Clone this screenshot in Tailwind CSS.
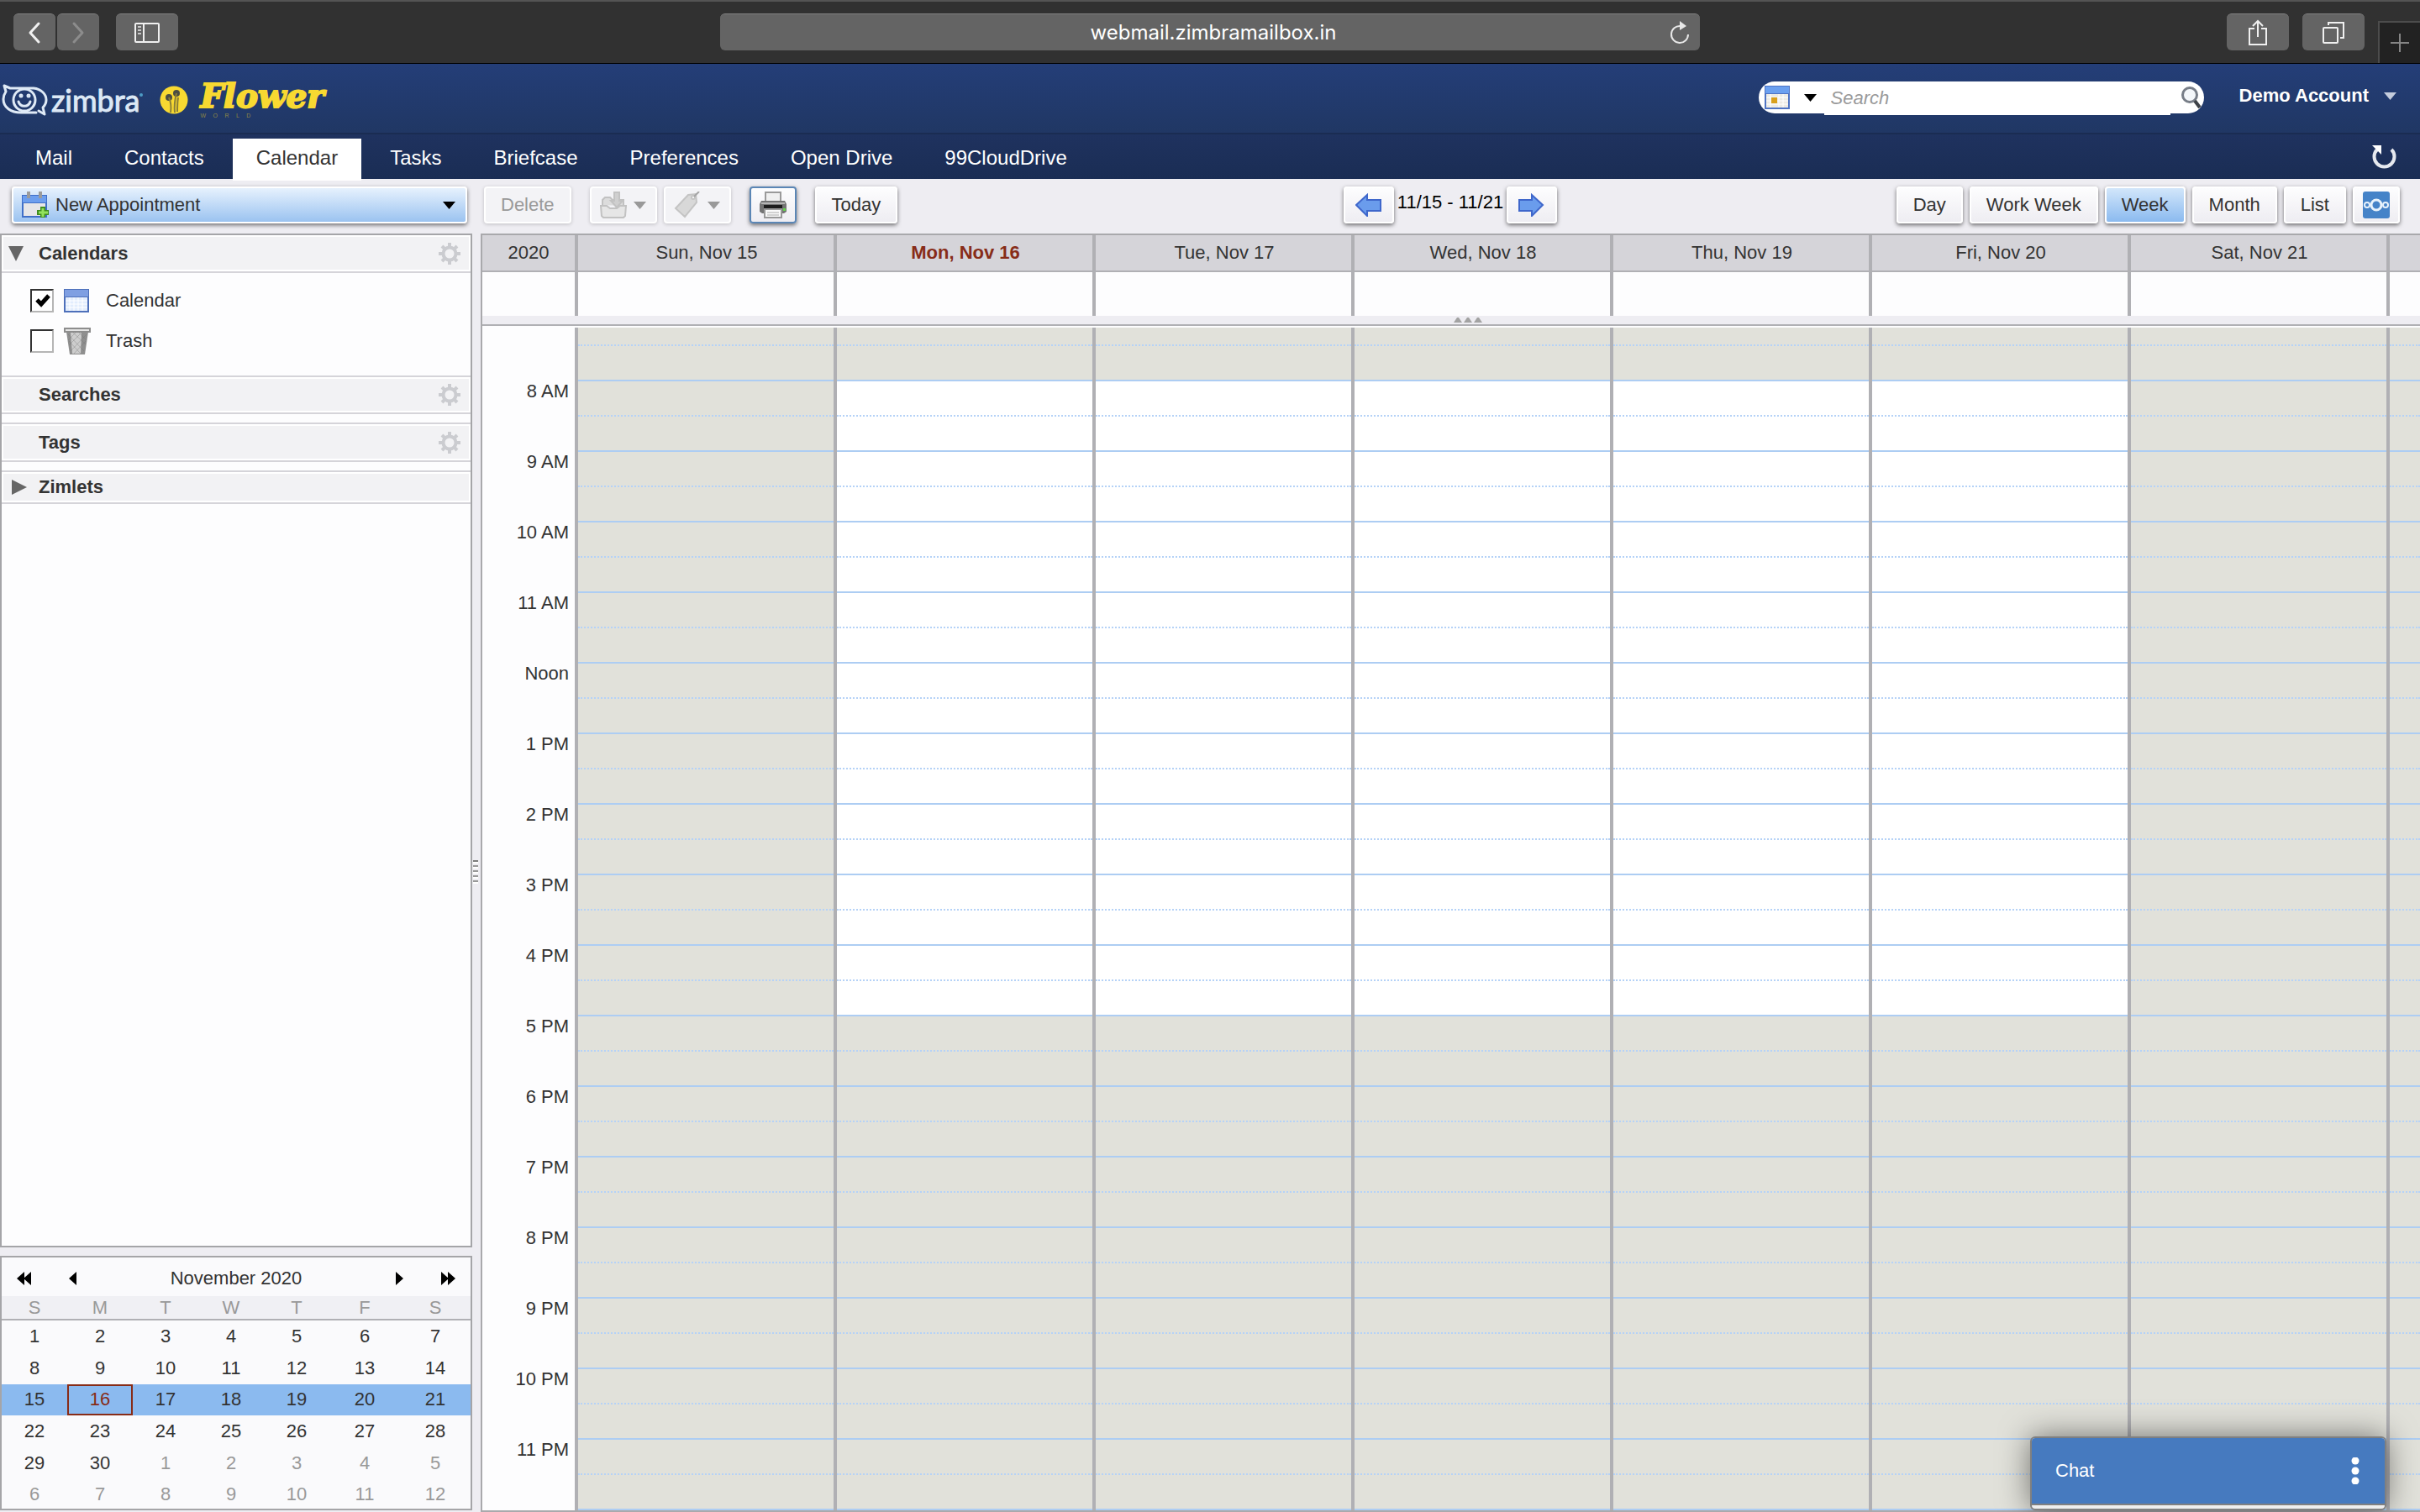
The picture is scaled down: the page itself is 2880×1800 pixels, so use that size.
<!DOCTYPE html>
<html lang="en">
<head>
    <meta charset="UTF-8">
    <meta name="viewport" content="width=device-width, initial-scale=1.0">
    <title>Zimbra: Calendar</title>
    <script src="https://cdn.jsdelivr.net/npm/@tailwindcss/browser@4"></script>
</head>
<body class="h-screen flex flex-col overflow-hidden bg-[#eeedf2] font-['Liberation_Sans',Arial,sans-serif] text-[22px] leading-7 text-[#333]">

    <!-- Browser bar -->
    <div class="h-[76px] shrink-0 grid grid-cols-[1fr_40.5%_1fr] bg-[#313131] border-t-2 border-t-[#545454] border-b border-b-black">
        <div class="flex items-start pt-[14px] pl-4">
            <button aria-label="Back" class="w-[50px] h-11 mr-0.5 flex items-center justify-center rounded-md bg-[#646464] border-t border-[#808080]">
                <svg class="w-4 h-7" viewBox="0 0 16 28" fill="none" stroke="#f0f0f0" stroke-width="3" stroke-linecap="round" stroke-linejoin="round"><path d="M13 3 3 14l10 11"/></svg>
            </button>
            <button aria-label="Forward" class="w-[50px] h-11 mr-5 flex items-center justify-center rounded-md bg-[#646464] border-t border-[#808080]">
                <svg class="w-4 h-7" viewBox="0 0 16 28" fill="none" stroke="#8c8c8c" stroke-width="3" stroke-linecap="round" stroke-linejoin="round"><path d="m3 3 10 11L3 25"/></svg>
            </button>
            <button aria-label="Sidebar" class="w-[74px] h-11 flex items-center justify-center rounded-md bg-[#646464] border-t border-[#808080]">
                <svg class="w-[30px] h-6" viewBox="0 0 30 24" fill="none" stroke="#f0f0f0" stroke-width="2"><rect x="1" y="1" width="28" height="22" rx="1"/><path d="M11 1v22"/><path d="M4 5h4M4 9h4M4 13h4" stroke="#c8c8c8"/></svg>
            </button>
        </div>
        <div class="mt-[14px] h-11 flex items-center rounded-md bg-[#646464] border-t border-[#808080] pl-11 pr-3">
            <span class="flex-1 text-center text-white text-2xl font-['Inter',sans-serif]">webmail.zimbramailbox.in</span>
            <button aria-label="Reload">
                <svg class="w-6 h-7" viewBox="0 0 24 28" fill="none" stroke="#e8e8e8" stroke-width="2"><path d="M13 6a10 10 0 1 0 9 10"/><path d="M12 0v11l8-5z" fill="#e8e8e8" stroke="none"/></svg>
            </button>
        </div>
        <div class="flex items-start justify-end">
            <button aria-label="Share" class="mt-[14px] w-[74px] h-11 flex items-center justify-center rounded-md bg-[#646464] border-t border-[#808080]">
                <svg class="w-6 h-8" viewBox="0 0 24 32" fill="none" stroke="#f0f0f0" stroke-width="2"><path d="M8 11H2v19h20V11h-6M12 21V2M6 8l6-6 6 6"/></svg>
            </button>
            <button aria-label="Tabs" class="mt-[14px] ml-4 mr-4 w-[74px] h-11 flex items-center justify-center rounded-md bg-[#646464] border-t border-[#808080]">
                <svg class="w-[26px] h-[26px]" viewBox="0 0 26 26" fill="none" stroke="#f0f0f0" stroke-width="2"><rect x="1" y="7" width="17" height="18" rx="1"/><path d="M7 4V1h18v18h-4"/></svg>
            </button>
            <button aria-label="New tab" class="mt-[23px] w-[50px] h-[50px] flex items-center justify-center bg-[#222] border-t-2 border-l-2 border-[#4c4c4c]">
                <svg class="w-[22px] h-[22px]" viewBox="0 0 22 22" stroke="#858585" stroke-width="2"><path d="M11 0v22M0 11h22"/></svg>
            </button>
        </div>
    </div>

    <!-- Header: logos, search, account -->
    <header class="h-[82px] shrink-0 flex items-start bg-linear-to-b from-[#243e78] to-[#203764]">
        <div class="flex items-center pt-5 pl-0.5">
            <svg class="w-[55px] h-10 shrink-0" viewBox="0 0 55 40" fill="none" stroke="#dfeaf6" stroke-width="3" stroke-linecap="round" stroke-linejoin="round">
                <path d="M41 35H23C11 35 2 29 2 19c0-4 1-6 3-9L3 3l7 3h28c9 1 15 7 15 14 0 4-2 7-4 9l2 8-7-4"/>
                <circle cx="27" cy="20" r="13"/><path d="M20 22c2 7 12 7 14 0"/>
                <circle cx="23" cy="15" r="1" fill="#dfeaf6"/><circle cx="32" cy="15" r="1" fill="#dfeaf6"/>
            </svg>
            <span class="ml-1 text-[36px] leading-10 text-[#dce8f5] [-webkit-text-stroke:1px_#dce8f5] font-['Lato',sans-serif]">zimbra</span>
            <svg class="w-1 h-2 mb-3 shrink-0" viewBox="0 0 4 8" fill="#4d9bc4"><circle cx="2" cy="4" r="2"/></svg>
            <svg class="w-[34px] h-[34px] ml-5 shrink-0" viewBox="0 0 34 34">
                <circle cx="17" cy="17" r="16.500" fill="#f8d931"/>
                <g fill="#4b4d42"><circle cx="11" cy="14" r="4"/><circle cx="20" cy="9" r="4"/></g>
                <path d="M11 14c3 7 3 12 2 18M20 9c-2 8-3 14-2 23M22 14c-1 6-1 12-1 17" stroke="#8a7f37" stroke-width="2" fill="none"/>
            </svg>
            <div class="relative ml-3.5">
                <span class="block pb-2.5 text-[39px] leading-9 font-bold italic text-[#f8d931] [-webkit-text-stroke:2px_#f8d931] font-['DejaVu_Serif',serif]">Flower</span>
                <span class="absolute left-0 top-9 flex w-[60px] justify-between text-[7px] leading-3 text-[#8d8745]"><span>W</span><span>O</span><span>R</span><span>L</span><span>D</span></span>
            </div>
        </div>

        <form class="ml-auto mt-[21px] h-[38px] w-[530px] flex items-center rounded-full bg-white pl-1.5">
            <svg class="w-8 h-7 shrink-0" viewBox="0 0 32 28"><rect x="1" y="0" width="30" height="28" fill="#4f74c4"/><rect x="2" y="1" width="28" height="8" fill="#6ba0f0"/><rect x="3" y="10" width="26" height="16" fill="#eceae4"/><path d="M3 14h26M3 18h26M3 22h26M8 10v16M18 10v16M23 10v16" stroke="#fff"/><rect x="9" y="14" width="7" height="7" fill="#d9a01c"/></svg>
            <button type="button" aria-label="Search in" class="ml-4 w-6"><svg class="w-[15px] h-[9px]" viewBox="0 0 15 9"><path d="M0 0h15L7.500 9z"/></svg></button>
            <input type="text" aria-label="Search" placeholder="Search" class="flex-1 min-w-0 h-10 mt-0.5 pl-2 bg-white text-[22px] italic placeholder:text-[#999] outline-none">
            <button type="button" aria-label="Run search" class="ml-3 mr-0.5">
                <svg class="w-[26px] h-7" viewBox="0 0 26 28" fill="none"><circle cx="11" cy="11" r="8.500" stroke="#777d87" stroke-width="3" fill="#f4f7fa"/><path d="m17 18 6 8" stroke="#3e4248" stroke-width="4"/></svg>
            </button>
        </form>
        <button class="mt-6 ml-[42px] mr-7 flex items-center font-bold text-white">Demo Account
            <svg class="ml-[18px] w-[15px] h-[9px]" viewBox="0 0 15 9" fill="#c5cddd"><path d="M0 0h15L7.500 9z"/></svg>
        </button>
    </header>

    <!-- Application tabs -->
    <nav class="h-[55px] shrink-0 flex items-start gap-1.5 pl-[14px] pr-7 border-t-2 border-[#1a2c52] bg-linear-to-b from-[#1f325f] to-[#1a2d54] text-2xl leading-[46px] text-white">
        <a href="#" class="mt-[5px] h-[50px] px-7">Mail</a>
        <a href="#" class="mt-[5px] h-[50px] px-7">Contacts</a>
        <a href="#" class="relative z-10 mt-[5px] h-[50px] px-7 bg-white text-[#333]">Calendar</a>
        <a href="#" class="mt-[5px] h-[50px] px-7">Tasks</a>
        <a href="#" class="mt-[5px] h-[50px] px-7">Briefcase</a>
        <a href="#" class="mt-[5px] h-[50px] px-7">Preferences</a>
        <a href="#" class="mt-[5px] h-[50px] px-7">Open Drive</a>
        <a href="#" class="mt-[5px] h-[50px] px-7">99CloudDrive</a>
        <button aria-label="Refresh" class="ml-auto mt-3">
            <svg class="w-[30px] h-[30px]" viewBox="0 0 30 30" fill="none"><path d="M24 6a12 12 0 1 1-17 0" stroke="#e6e9ef" stroke-width="4"/><path d="M1 1h11v11z" fill="#fff"/></svg>
        </button>
    </nav>

    <!-- Toolbar -->
    <div class="h-[65px] shrink-0 flex items-start pt-[9px]">
        <div class="w-[572px] shrink-0 pl-[14px] pr-4">
            <button class="w-full h-11 flex items-center pl-2.5 pr-3 rounded-sm border-2 border-white bg-linear-to-b from-[#e6f1fd] to-[#9bc3f0] shadow-[0_2px_5px_rgba(0,0,0,0.55)]">
                <svg class="w-8 h-8 mr-2" viewBox="0 0 32 32"><rect x="0" y="4" width="30" height="27" fill="#3f6fc8"/><rect x="1" y="5" width="28" height="8" fill="#6d9fee"/><rect x="2" y="14" width="26" height="15" fill="#e6e6e8"/><path d="M8 0v8M22 0v8" stroke="#9b9b9b" stroke-width="4"/><path d="M25 18v13M18 25h14" stroke="#3f8d1e" stroke-width="6"/><path d="M25 20v10M20 25h11" stroke="#93e25c" stroke-width="3"/></svg>
                New Appointment
                <svg class="ml-auto w-[15px] h-[9px]" viewBox="0 0 15 9"><path d="M0 0h15L7.500 9z"/></svg>
            </button>
        </div>
        <div class="flex-1 grid grid-cols-[1fr_auto_1fr]">
            <div class="flex pl-1">
                <button disabled class="h-11 px-[18px] rounded-sm border-2 border-white bg-[#f3f3f6] text-[#999] shadow-[0_1px_4px_rgba(0,0,0,0.2)]">Delete</button>
                <button disabled aria-label="Move" class="ml-[22px] w-20 h-11 flex items-center justify-center gap-2 rounded-sm border-2 border-white bg-[#f3f3f6] shadow-[0_1px_4px_rgba(0,0,0,0.2)]">
                    <svg class="w-8 h-8" viewBox="0 0 32 32" fill="#dcdcdc" stroke="#c2c2c2" stroke-width="2"><path d="M3 16V10l3-3h6l3 3h13v7"/><path d="M17 1h6v10h4l-7 8-7-8h4z" fill="#cfcfcf"/><path d="M1 17h7l4 3h8l4-3h7l-1 12-2 2H4l-2-2z" fill="#e6e6e6"/></svg>
                    <svg class="w-[15px] h-[9px]" viewBox="0 0 15 9" fill="#999"><path d="M0 0h15L7.500 9z"/></svg>
                </button>
                <button disabled aria-label="Tag" class="ml-2 w-20 h-11 flex items-center justify-center gap-2 rounded-sm border-2 border-white bg-[#f3f3f6] shadow-[0_1px_4px_rgba(0,0,0,0.2)]">
                    <svg class="w-8 h-8" viewBox="0 0 32 32" fill="#d8d8d8" stroke="#c4c4c4" stroke-width="2"><path d="M2 20 17 4l9-1 1 10-14 17z"/><circle cx="23" cy="7" r="2" fill="#fff"/><path d="m24 6 6-6" stroke="#a5a5a5"/></svg>
                    <svg class="w-[15px] h-[9px]" viewBox="0 0 15 9" fill="#999"><path d="M0 0h15L7.500 9z"/></svg>
                </button>
                <button aria-label="Print" class="ml-[22px] w-14 h-11 flex items-center justify-center rounded-sm border-2 border-[#5b86b5] bg-linear-to-b from-[#fdfdfe] to-[#eeedf2] shadow-[0_2px_5px_rgba(0,0,0,0.55)]">
                    <svg class="w-8 h-8" viewBox="0 0 32 32"><rect x="7" y="1" width="18" height="12" fill="#f0f0f0" stroke="#9a9a9a" stroke-width="2"/><path d="M2 11h28l2 4v9l-3 2H3l-3-2v-9z" fill="#747474"/><path d="M2 14h28" stroke="#b5b5b5" stroke-width="2"/><rect x="5" y="16" width="22" height="4" fill="#1c1c1c"/><rect x="6" y="21" width="20" height="10" fill="#fafafa" stroke="#999" stroke-width="2"/><path d="M9 25h14M9 28h14" stroke="#aaa"/><rect x="28" y="20" width="3" height="3" fill="#62d44a"/></svg>
                </button>
                <button class="ml-[22px] h-11 px-[18px] rounded-sm border-2 border-white bg-linear-to-b from-[#fdfdfe] to-[#eeedf2] shadow-[0_2px_5px_rgba(0,0,0,0.55)]">Today</button>
            </div>
            <div class="flex items-start">
                <button aria-label="Previous week" class="w-[60px] h-11 flex items-center justify-center rounded-sm border-2 border-white bg-linear-to-b from-[#fdfdfe] to-[#eeedf2] shadow-[0_2px_5px_rgba(0,0,0,0.55)]">
                    <svg class="w-8 h-7" viewBox="0 0 32 28" fill="#6a9cec" stroke="#3f67cb" stroke-width="2"><path d="M1 14 14 2v6h16v13H14v6z"/></svg>
                </button>
                <span class="w-[134px] pt-[5px] text-center text-black whitespace-nowrap">11/15 - 11/21</span>
                <button aria-label="Next week" class="w-[60px] h-11 flex items-center justify-center rounded-sm border-2 border-white bg-linear-to-b from-[#fdfdfe] to-[#eeedf2] shadow-[0_2px_5px_rgba(0,0,0,0.55)]">
                    <svg class="w-8 h-7" viewBox="0 0 32 28" fill="#6a9cec" stroke="#3f67cb" stroke-width="2"><path d="M29 14 16 2v6H1v13h15v6z"/></svg>
                </button>
            </div>
            <div class="flex justify-end gap-2 pr-6">
                <button class="h-11 px-[18px] rounded-sm border-2 border-white bg-linear-to-b from-[#fdfdfe] to-[#eeedf2] shadow-[0_2px_5px_rgba(0,0,0,0.55)]">Day</button>
                <button class="h-11 px-[18px] rounded-sm border-2 border-white bg-linear-to-b from-[#fdfdfe] to-[#eeedf2] shadow-[0_2px_5px_rgba(0,0,0,0.55)]">Work Week</button>
                <button class="h-11 px-[18px] rounded-sm border-2 border-white bg-linear-to-b from-[#d2e6fa] to-[#8bbaef] shadow-[0_2px_5px_rgba(0,0,0,0.55)]">Week</button>
                <button class="h-11 px-[18px] rounded-sm border-2 border-white bg-linear-to-b from-[#fdfdfe] to-[#eeedf2] shadow-[0_2px_5px_rgba(0,0,0,0.55)]">Month</button>
                <button class="h-11 px-[18px] rounded-sm border-2 border-white bg-linear-to-b from-[#fdfdfe] to-[#eeedf2] shadow-[0_2px_5px_rgba(0,0,0,0.55)]">List</button>
                <button aria-label="Nextcloud" class="w-14 h-11 flex items-center justify-center rounded-sm border-2 border-white bg-linear-to-b from-[#fdfdfe] to-[#eeedf2] shadow-[0_2px_5px_rgba(0,0,0,0.55)]">
                    <svg class="w-8 h-8" viewBox="0 0 32 32" fill="none" stroke="#e8f2fb" stroke-width="2"><rect width="32" height="32" rx="3" fill="#4583c8" stroke="none"/><circle cx="16" cy="16" r="6" stroke-width="3"/><circle cx="5" cy="16" r="3"/><circle cx="27" cy="16" r="3"/></svg>
                </button>
            </div>
        </div>
    </div>

    <main class="flex-1 min-h-0 flex">
        <!-- Sidebar -->
        <aside class="w-[562px] shrink-0 flex flex-col gap-2.5 pb-0.5">
            <div class="flex-1 min-h-0 border-2 border-[#a5a5a8] bg-[#fdfdfe]">
                <div class="h-[45px] flex items-center pl-2 pr-3 border-b-2 border-[#d5d4d9] bg-[#f2f2f4] shadow-[inset_0_0_0_2px_#fff]">
                    <svg class="w-[18px] h-[18px]" viewBox="0 0 18 18" fill="#666"><path d="M0 0h18L9 18z"/></svg>
                    <h2 class="ml-[18px] flex-1 font-bold">Calendars</h2>
                    <svg class="w-[26px] h-[26px]" viewBox="0 0 26 26" fill="none" stroke="#cbccd0"><circle cx="13" cy="13" r="7.500" stroke-width="4"/><path d="M13 0v5M13 21v5M0 13h5M21 13h5M4 4l3 3M19 19l3 3M22 4l-3 3M7 19l-3 3" stroke-width="4"/></svg>
                </div>
                <ul class="pt-[9px] pb-[17px]">
                    <li class="h-12">
                        <label class="relative h-full flex items-center pl-[34px]">
                            <input type="checkbox" checked class="appearance-none w-7 h-7 bg-white border-2 border-t-[#333] border-l-[#333] border-r-[#b5b5b5] border-b-[#b5b5b5]">
                            <svg class="absolute left-10 top-4 w-[18px] h-[16px]" viewBox="0 0 18 16" fill="none" stroke="#000" stroke-width="5"><path d="m2 7 5 5 9-10"/></svg>
                            <svg class="ml-3 w-[30px] h-7" viewBox="0 0 30 28"><rect width="30" height="28" fill="#4e70ba"/><rect x="1" y="1" width="28" height="8" fill="#7f9fe2"/><rect x="2" y="10" width="26" height="16" fill="#e2edfd"/><path d="M2 14h26M2 18h26M2 22h26M7 10v16M12 10v16M17 10v16M22 10v16" stroke="#fff"/></svg>
                            <span class="ml-5">Calendar</span>
                        </label>
                    </li>
                    <li class="h-12">
                        <label class="h-full flex items-center pl-[34px]">
                            <input type="checkbox" class="appearance-none w-7 h-7 bg-white border-2 border-t-[#333] border-l-[#333] border-r-[#b5b5b5] border-b-[#b5b5b5]">
                            <svg class="ml-3 w-8 h-8" viewBox="0 0 32 32"><path d="M3 5h26l-4 27H7z" fill="#8f8f8f"/><path d="M8 6h13l-1 25H10z" fill="#cdcdcd"/><path d="m5 8 19 20M11 6l15 14M18 6l9 9M6 16l14 15M27 8 8 28M21 6 6 21M14 6l-9 9M26 16 12 31" stroke="#707070" stroke-opacity=".35"/><rect x="1" y="1" width="30" height="4" fill="#e4e4e4" stroke="#8d8d8d" stroke-width="2"/></svg>
                            <span class="ml-[18px]">Trash</span>
                        </label>
                    </li>
                </ul>
                <div class="h-[46px] mb-2.5 flex items-center pl-11 pr-3 border-y-2 border-[#d5d4d9] bg-[#f2f2f4] shadow-[inset_0_0_0_2px_#fff]">
                    <h2 class="flex-1 font-bold">Searches</h2>
                    <svg class="w-[26px] h-[26px]" viewBox="0 0 26 26" fill="none" stroke="#cbccd0"><circle cx="13" cy="13" r="7.500" stroke-width="4"/><path d="M13 0v5M13 21v5M0 13h5M21 13h5M4 4l3 3M19 19l3 3M22 4l-3 3M7 19l-3 3" stroke-width="4"/></svg>
                </div>
                <div class="h-[47px] mb-2.5 flex items-center pl-11 pr-3 border-y-2 border-[#d5d4d9] bg-[#f2f2f4] shadow-[inset_0_0_0_2px_#fff]">
                    <h2 class="flex-1 font-bold">Tags</h2>
                    <svg class="w-[26px] h-[26px]" viewBox="0 0 26 26" fill="none" stroke="#cbccd0"><circle cx="13" cy="13" r="7.500" stroke-width="4"/><path d="M13 0v5M13 21v5M0 13h5M21 13h5M4 4l3 3M19 19l3 3M22 4l-3 3M7 19l-3 3" stroke-width="4"/></svg>
                </div>
                <div class="h-10 flex items-center pl-3 border-y-2 border-[#d5d4d9] bg-[#f2f2f4] shadow-[inset_0_0_0_2px_#fff]">
                    <svg class="w-[18px] h-[18px]" viewBox="0 0 18 18" fill="#666"><path d="M0 0v18l18-9z"/></svg>
                    <h2 class="ml-3.5 font-bold">Zimlets</h2>
                </div>
            </div>

            <!-- Mini calendar -->
            <div class="h-[303px] shrink-0 border-2 border-[#a5a5a8] bg-[#fafafc]">
                <div class="h-[46px] pt-1 flex items-center px-[18px]">
                    <button aria-label="Previous year" class="w-[62px]"><svg class="w-[18px] h-4" viewBox="0 0 18 16"><path d="M9 0v16L0 8zM17 0v16L8 8z"/></svg></button>
                    <button aria-label="Previous month"><svg class="w-[9px] h-4" viewBox="0 0 9 16"><path d="M9 0v16L0 8z"/></svg></button>
                    <span class="flex-1 text-center">November 2020</span>
                    <button aria-label="Next month"><svg class="w-[9px] h-4" viewBox="0 0 9 16"><path d="M0 0v16l9-8z"/></svg></button>
                    <button aria-label="Next year" class="w-[62px] flex justify-end"><svg class="w-[18px] h-4" viewBox="0 0 18 16"><path d="M1 0v16l9-8zM9 0v16l9-8z"/></svg></button>
                </div>
                <table class="w-full h-[255px] table-fixed border-collapse text-center leading-[26px]">
                    <thead class="bg-[#f0f0f4] text-[#999]">
                        <tr class="h-7 border-b-2 border-[#b0b0b4]">
                            <th class="w-[78px] font-normal">S</th><th class="w-[78px] font-normal">M</th><th class="w-[78px] font-normal">T</th><th class="w-[78px] font-normal">W</th><th class="w-[78px] font-normal">T</th><th class="font-normal">F</th><th class="font-normal">S</th>
                        </tr>
                    </thead>
                    <tbody id="mini-calendar"></tbody>
                </table>
            </div>
        </aside>

        <!-- Sash -->
        <div class="w-2.5 shrink-0 flex flex-col items-start pl-px pb-1 justify-center gap-1">
            <i class="w-1.5 h-0.5 bg-[#7d7d7d] shadow-[0_2px_0_#fff]"></i>
            <i class="w-1.5 h-0.5 bg-[#999] shadow-[0_2px_0_#fff]"></i>
            <i class="w-1.5 h-0.5 bg-[#999] shadow-[0_2px_0_#fff]"></i>
            <i class="w-1.5 h-0.5 bg-[#999] shadow-[0_2px_0_#fff]"></i>
            <i class="w-1.5 h-0.5 bg-[#999] shadow-[0_2px_0_#fff]"></i>
        </div>

        <!-- Week view -->
        <section class="flex-1 min-w-0 flex flex-col border-2 border-r-0 border-[#a9a9ac] bg-[#fdfdfe]">
            <div class="h-11 shrink-0 flex border-b-2 border-[#b0b0b4] bg-[#d5d4d9] text-center leading-[42px]">
                <div class="w-[110px]">2020</div>
                <div class="flex-1 pl-0.5 border-l-4 border-[#b0b0b4]">Sun, Nov 15</div>
                <div class="flex-1 pl-0.5 border-l-4 border-[#b0b0b4] font-bold text-[#872c18]">Mon, Nov 16</div>
                <div class="flex-1 pl-0.5 border-l-4 border-[#b0b0b4]">Tue, Nov 17</div>
                <div class="flex-1 pl-0.5 border-l-4 border-[#b0b0b4]">Wed, Nov 18</div>
                <div class="flex-1 pl-0.5 border-l-4 border-[#b0b0b4]">Thu, Nov 19</div>
                <div class="flex-1 pl-0.5 border-l-4 border-[#b0b0b4]">Fri, Nov 20</div>
                <div class="flex-1 pl-0.5 border-l-4 border-[#b0b0b4]">Sat, Nov 21</div>
                <div class="w-10 border-l-4 border-[#b0b0b4]"></div>
            </div>
            <!-- All-day events -->
            <div class="h-[52px] shrink-0 flex">
                <div class="w-[110px]"></div>
                <div class="flex-1 border-l-4 border-[#b0b0b4]"></div>
                <div class="flex-1 border-l-4 border-[#b0b0b4]"></div>
                <div class="flex-1 border-l-4 border-[#b0b0b4]"></div>
                <div class="flex-1 border-l-4 border-[#b0b0b4]"></div>
                <div class="flex-1 border-l-4 border-[#b0b0b4]"></div>
                <div class="flex-1 border-l-4 border-[#b0b0b4]"></div>
                <div class="flex-1 border-l-4 border-[#b0b0b4]"></div>
                <div class="w-10 border-l-4 border-[#b0b0b4]"></div>
            </div>
            <div class="h-3 shrink-0 flex justify-center pt-0.5 pl-10 border-b-2 border-[#b0b0b4] bg-[#eeedf2]">
                <svg class="w-[34px] h-1.5" viewBox="0 0 34 6" fill="#a3a3a3"><path d="M0 6l4-6h2l4 6zM12 6l4-6h2l4 6zM24 6l4-6h2l4 6z"/></svg>
            </div>
            <div id="week" class="flex-1 min-h-0 mt-0.5 flex overflow-hidden"></div>
        </section>
    </main>

    <!-- Chat -->
    <div class="absolute right-10 bottom-0.5 w-[424px] h-[88px] flex flex-col rounded-md overflow-hidden border-2 border-[#808080] bg-[#eee] shadow-[0_0_36px_rgba(0,0,0,0.5)]">
        <div class="h-20 flex items-center justify-between pl-7 pr-[30px] border-b-2 border-[#808080] bg-[#467abf] text-white">
            <span>Chat</span>
            <button aria-label="Chat menu"><svg class="w-2.5 h-8" viewBox="0 0 10 32" fill="#fff"><circle cx="5" cy="4" r="4.500"/><circle cx="5" cy="16" r="4.500"/><circle cx="5" cy="28" r="4.500"/></svg></button>
        </div>
    </div>

    <script>
        const labels = ['8 AM', '9 AM', '10 AM', '11 AM', 'Noon', '1 PM', '2 PM', '3 PM', '4 PM', '5 PM', '6 PM', '7 PM', '8 PM', '9 PM', '10 PM', '11 PM', ''];
        const week = document.getElementById('week');

        // Time labels; the first strip is the visible rest of 7 AM
        const times = document.createElement('div');
        times.className = 'w-[110px] shrink-0 text-right pr-[7px]';
        times.innerHTML = '<div class="h-[62px]"></div>' + labels.map(t => `<div class="h-[84px]">${t}</div>`).join('');
        week.appendChild(times);

        // Seven days and the cut-off column at the right edge
        for (let day = 0; day < 8; day++) {
            const column = document.createElement('div');
            column.className = day < 7 ? 'flex-1 border-l-4 border-[#b0b0b4] bg-[#e1e1da]' : 'w-10 shrink-0 border-l-4 border-[#b0b0b4] bg-[#e1e1da]';
            let html = '<div class="h-[62px] pt-5"><div class="border-t-2 border-dotted border-[#b5d2f7]"></div></div>';
            labels.forEach((t, i) => {
                const working = day > 0 && day < 6 && i < 9;
                html += `<div class="h-[84px] pt-10 border-t-2 border-[#adcdf3] ${working ? 'bg-white' : ''}"><div class="border-t-2 border-dotted border-[#b5d2f7]"></div></div>`;
            });
            column.innerHTML = html;
            week.appendChild(column);
        }

        // Mini calendar: November 1 is a Sunday
        const body = document.getElementById('mini-calendar');
        for (let w = 0; w < 6; w++) {
            const row = document.createElement('tr');
            if (w === 2) row.className = 'bg-[#8bbaef]';
            for (let d = 1; d <= 7; d++) {
                const n = w * 7 + d;
                const cell = document.createElement('td');
                cell.textContent = n > 30 ? n - 30 : n;
                if (n > 30) cell.className = 'text-[#999]';
                if (n === 16) cell.className = 'text-[#872c18] outline-2 -outline-offset-2 outline-[#872c18]';
                row.appendChild(cell);
            }
            body.appendChild(row);
        }
    </script>
</body>
</html>
